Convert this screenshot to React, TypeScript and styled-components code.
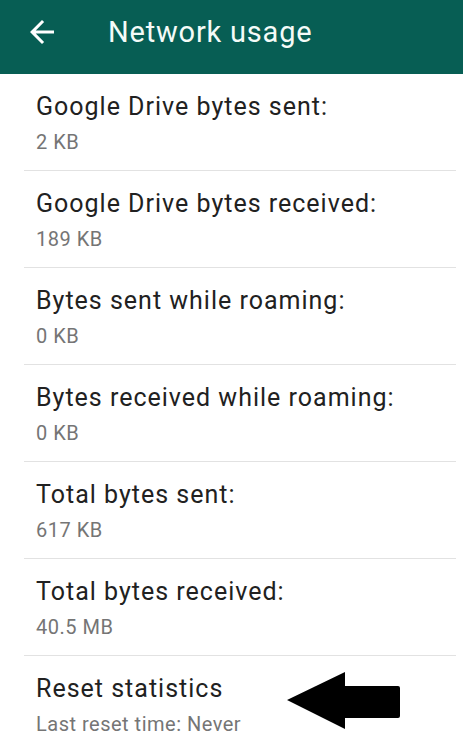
import styled, { createGlobalStyle } from 'styled-components';

const GlobalStyle = createGlobalStyle`
  body {
    margin: 0;
    background: #ffffff;
    font-family: Roboto, 'Noto Sans', sans-serif;
  }
`;

const stats = [
  { title: 'Google Drive bytes sent:', value: '2 KB' },
  { title: 'Google Drive bytes received:', value: '189 KB' },
  { title: 'Bytes sent while roaming:', value: '0 KB' },
  { title: 'Bytes received while roaming:', value: '0 KB' },
  { title: 'Total bytes sent:', value: '617 KB' },
  { title: 'Total bytes received:', value: '40.5 MB' },
];

function App() {
  return (
    <Page>
      <GlobalStyle />
      <Toolbar>
        <BackButton aria-label="back">
          <svg width="36" height="36" viewBox="0 0 24 24">
            <path
              fill="#ffffff"
              d="M20 11H7.83l5.59-5.59L12 4l-8 8 8 8 1.41-1.41L7.83 13H20v-2z"
            />
          </svg>
        </BackButton>
        <Title>Network usage</Title>
      </Toolbar>
      <List>
        {stats.map((s) => (
          <li key={s.title}>
            <Row>
              <RowTitle>{s.title}</RowTitle>
              <RowValue>{s.value}</RowValue>
            </Row>
            <Divider />
          </li>
        ))}
        <li>
          <Row>
            <RowTitle>Reset statistics</RowTitle>
            <RowValue>Last reset time: Never</RowValue>
            <Pointer width="114" height="58" viewBox="0 0 114 58">
              <path
                fill="#000000"
                d="M0 28 L58 0 L58 14 L111 14 Q113 14 113 16 L113 44 Q113 46 111 46 L58 46 L58 57 Z"
              />
            </Pointer>
          </Row>
        </li>
      </List>
    </Page>
  );
}

const Page = styled.div`
  width: 463px;
  min-height: 752px;
  background: #ffffff;
  overflow: hidden;
`;

const Toolbar = styled.header`
  display: flex;
  align-items: center;
  height: 74px;
  padding-left: 24px;
  background: #075e54;
  box-sizing: border-box;
`;

const BackButton = styled.span`
  display: flex;
  width: 36px;
  height: 36px;
  margin-top: -10px;
  margin-right: 48px;
`;

const Title = styled.h1`
  margin: -10px 0 0;
  font-size: 29px;
  font-weight: 400;
  letter-spacing: 0.8px;
  color: #f4fbf8;
`;

const List = styled.ul`
  list-style: none;
  margin: 0;
  padding: 0;
`;

const Row = styled.div`
  position: relative;
  display: flex;
  flex-direction: column;
  height: 96px;
  padding: 18px 0 0 36px;
  box-sizing: border-box;
`;

const RowTitle = styled.div`
  font-size: 25px;
  line-height: 29px;
  letter-spacing: 1px;
  color: #212121;
  white-space: nowrap;
`;

const RowValue = styled.div`
  margin-top: 9px;
  font-size: 20px;
  line-height: 24px;
  letter-spacing: 0.5px;
  color: #757575;
  white-space: nowrap;
`;

const Divider = styled.hr`
  margin: 0 7px 0 24px;
  border: 0;
  height: 1px;
  background: #e2e2e2;
`;

const Pointer = styled.svg`
  position: absolute;
  left: 287px;
  top: 16px;
`;

export default App;
